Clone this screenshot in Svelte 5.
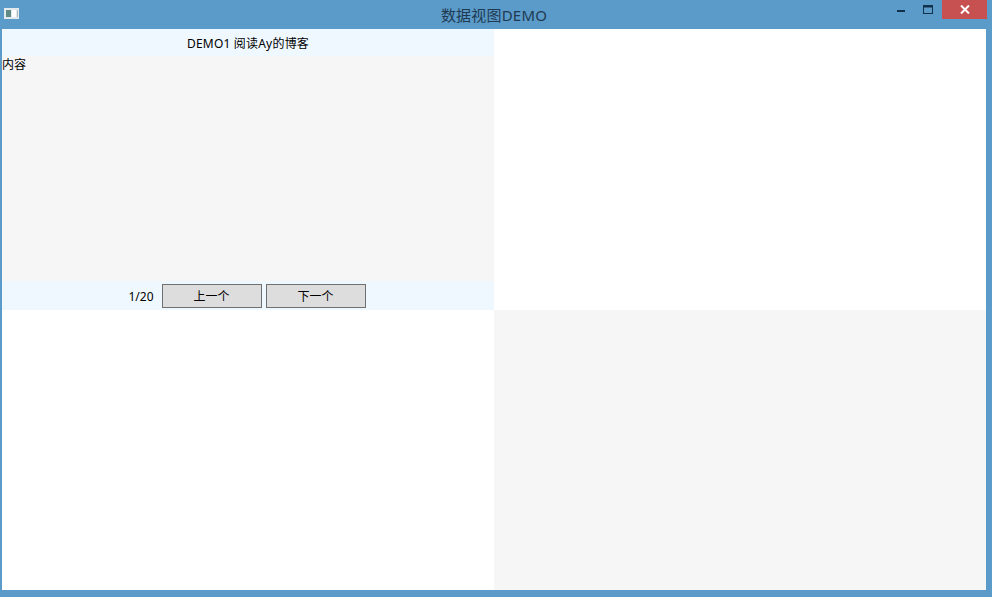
<script>
  const cells = ['panel', 'blank', 'blank', 'grey'];
</script>

<div class="window">
  <header class="titlebar">
    <svg class="app-icon" width="15" height="11" viewBox="0 0 15 11">
      <rect width="15" height="11" fill="#e4e9ed"/>
      <rect x="2" y="2" width="5" height="7" fill="#5f8a86"/>
      <rect x="8" y="2" width="4" height="7" fill="#fff"/>
      <rect x="13" y="2" width="1" height="7" fill="#aebbc6"/>
    </svg>
    <span class="title">数据视图DEMO</span>
    <div class="controls">
      <button class="ctl" aria-label="最小化">
        <svg width="9" height="3" viewBox="0 0 9 3"><rect width="8" height="2" y="1" fill="#10304c"/></svg>
      </button>
      <button class="ctl" aria-label="最大化">
        <svg width="11" height="10" viewBox="0 0 11 10"><rect x="0.5" y="0.5" width="9" height="8" fill="none" stroke="#10304c"/><rect x="0" y="0" width="10" height="2.5" fill="#10304c"/></svg>
      </button>
      <button class="close" aria-label="关闭">
        <svg width="10" height="9" viewBox="0 0 10 9"><path d="M1 0.5 L9 8.5 M9 0.5 L1 8.5" stroke="#fff" stroke-width="2"/></svg>
      </button>
    </div>
  </header>

  <main class="grid">
    {#each cells as cell}
      {#if cell === 'panel'}
        <section class="panel">
          <div class="bar head">DEMO1 阅读Ay的博客</div>
          <div class="content">内容</div>
          <div class="bar foot">
            <span class="page">1/20</span>
            <button class="btn">上一个</button>
            <button class="btn">下一个</button>
          </div>
        </section>
      {:else}
        <section class={cell}></section>
      {/if}
    {/each}
  </main>
</div>

<style>
  :global(body) {
    margin: 0;
    overflow: hidden;
  }

  .window {
    width: 992px;
    height: 597px;
    box-sizing: border-box;
    padding: 0 6px 7px 2px;
    background: #5b9bca;
    display: flex;
    flex-direction: column;
    font-family: "Noto Sans", "Noto Sans CJK SC", sans-serif;
    font-size: 12px;
    color: #000;
  }

  .titlebar {
    height: 29px;
    flex: none;
    position: relative;
    display: flex;
    align-items: center;
    justify-content: center;
  }

  .app-icon {
    position: absolute;
    left: 2px;
    top: 8px;
  }

  .title {
    font-size: 15px;
    letter-spacing: 0.2px;
    color: #1f3a52;
  }

  .controls {
    position: absolute;
    top: 0;
    right: -1px;
    display: flex;
    align-items: flex-start;
  }

  .ctl {
    width: 27px;
    height: 20px;
    padding: 0;
    border: 0;
    background: none;
    display: flex;
    align-items: center;
    justify-content: center;
  }

  .close {
    width: 45px;
    height: 19px;
    padding: 0;
    border: 0;
    background: #c75050;
    display: flex;
    align-items: center;
    justify-content: center;
  }

  .grid {
    flex: 1;
    display: grid;
    grid-template-columns: 1fr 1fr;
    grid-template-rows: 1fr 1fr;
    background: #fff;
  }

  .panel {
    display: flex;
    flex-direction: column;
    background: #f6f6f6;
    min-height: 0;
  }

  .grey {
    background: #f6f6f6;
  }

  .bar {
    height: 27px;
    flex: none;
    background: #f0f8ff;
    display: flex;
    align-items: center;
    justify-content: center;
  }

  .head {
    letter-spacing: 0.2px;
  }

  .foot {
    box-sizing: border-box;
    height: 29px;
    gap: 4px;
    padding: 2px 2px 0 0;
  }

  .content {
    flex: 1;
    line-height: 18px;
  }

  .page {
    margin-right: 4px;
  }

  .btn {
    width: 100px;
    height: 24px;
    padding: 0;
    border: 1px solid #707070;
    background: #dddddd;
    font: inherit;
    color: #000;
  }
</style>
